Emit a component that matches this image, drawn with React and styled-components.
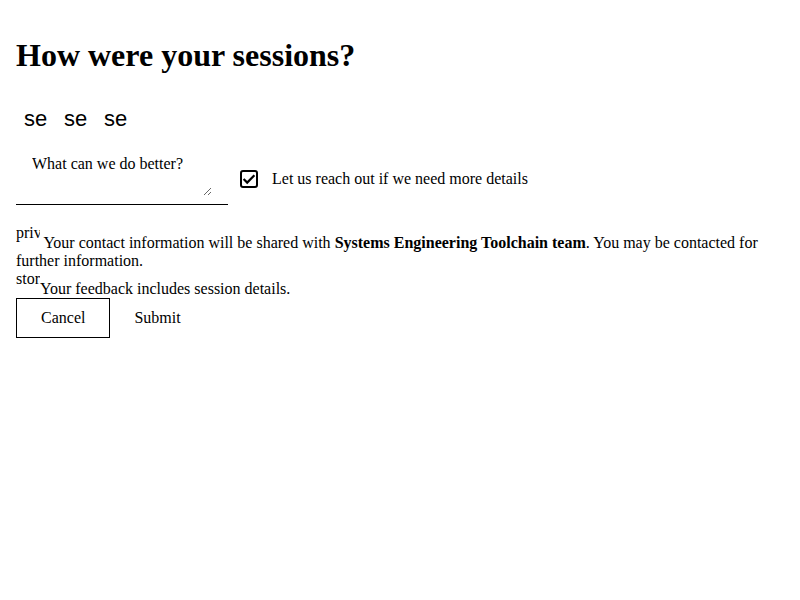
import styled, { createGlobalStyle } from "styled-components";

const GlobalStyle = createGlobalStyle`
    body {
        margin: 8px;
        background: #ffffff;
        color: #000000;
        font-family: "Liberation Serif", "Times New Roman", serif;
        font-size: 16px;
    }
`;

const ratings = ["sentiment_dissatisfied", "sentiment_neutral", "sentiment_satisfied"];

const CheckIcon = () => (
    <svg width="18" height="18" viewBox="0 0 18 18">
        <rect x="1" y="1" width="16" height="16" rx="2" fill="none" stroke="#000" strokeWidth="2" />
        <path d="M3.6 9 L7.2 12.6 L14.4 5.2" fill="none" stroke="#000" strokeWidth="2.2" />
    </svg>
);

const App = () => {
    return (
        <>
            <GlobalStyle />
            <FeedbackForm>
                <Title>How were your sessions?</Title>
                <RatingRow>
                    {ratings.map((r) => (
                        <RatingButton key={r}>{r}</RatingButton>
                    ))}
                </RatingRow>
                <InputRow>
                    <TextareaWrap>
                        <Comment placeholder="What can we do better?" />
                    </TextareaWrap>
                    <CheckLabel>
                        <CheckBox>
                            <CheckIcon />
                        </CheckBox>
                        Let us reach out if we need more details
                    </CheckLabel>
                </InputRow>
                <Notice>
                    <NoticeIcon>privacy_tip</NoticeIcon> Your contact information will be shared with{" "}
                    <b>Systems Engineering Toolchain team</b>. You may be contacted for further information.
                </Notice>
                <Notice>
                    <NoticeIcon>storage</NoticeIcon>Your feedback includes session details.
                </Notice>
                <Actions>
                    <ActionButton $outlined>Cancel</ActionButton>
                    <ActionButton>Submit</ActionButton>
                </Actions>
            </FeedbackForm>
        </>
    );
};

export const FeedbackForm = styled.div`
    display: flex;
    flex-direction: column;
    align-items: flex-start;
    padding: 8px;
`;
export const Title = styled.h1`
    font-size: 32px;
    font-weight: bold;
    margin: 21.44px 0;
`;
export const RatingRow = styled.div`
    display: flex;
    padding: 11px 8px 0;
`;
export const RatingButton = styled.div`
    width: 24px;
    margin-right: 16px;
    overflow: hidden;
    white-space: nowrap;
    font-family: "Liberation Sans", Arial, sans-serif;
    font-size: 22px;
    line-height: 24px;
    cursor: pointer;
`;
export const InputRow = styled.div`
    display: flex;
    align-items: center;
    margin-top: 16px;
    margin-bottom: 19px;
`;
export const TextareaWrap = styled.div`
    display: flex;
    padding: 8px 16px;
    border-bottom: 1px solid #000;
`;
export const Comment = styled.textarea`
    width: 180px;
    height: 41px;
    padding: 0;
    border: none;
    outline: none;
    background: transparent;
    font-family: "Liberation Serif", "Times New Roman", serif;
    font-size: 16px;
    &::placeholder {
        color: #000;
    }
`;
export const CheckLabel = styled.label`
    display: flex;
    align-items: center;
    gap: 14px;
    margin-left: 12px;
    margin-top: 6px;
`;
export const CheckBox = styled.span`
    display: flex;
    width: 18px;
    height: 18px;
`;
export const Notice = styled.div`
    line-height: 18px;
`;
export const NoticeIcon = styled.span`
    display: inline-block;
    width: 24px;
    height: 24px;
    overflow: hidden;
    white-space: nowrap;
`;
export const Actions = styled.div`
    display: flex;
`;
export const ActionButton = styled.button`
    height: 40px;
    padding: 0 24px;
    background: transparent;
    border: ${(p) => (p.$outlined ? "1px solid #000" : "none")};
    font-family: "Liberation Serif", "Times New Roman", serif;
    font-size: 16px;
    color: #000;
    cursor: pointer;
`;

export default App;
